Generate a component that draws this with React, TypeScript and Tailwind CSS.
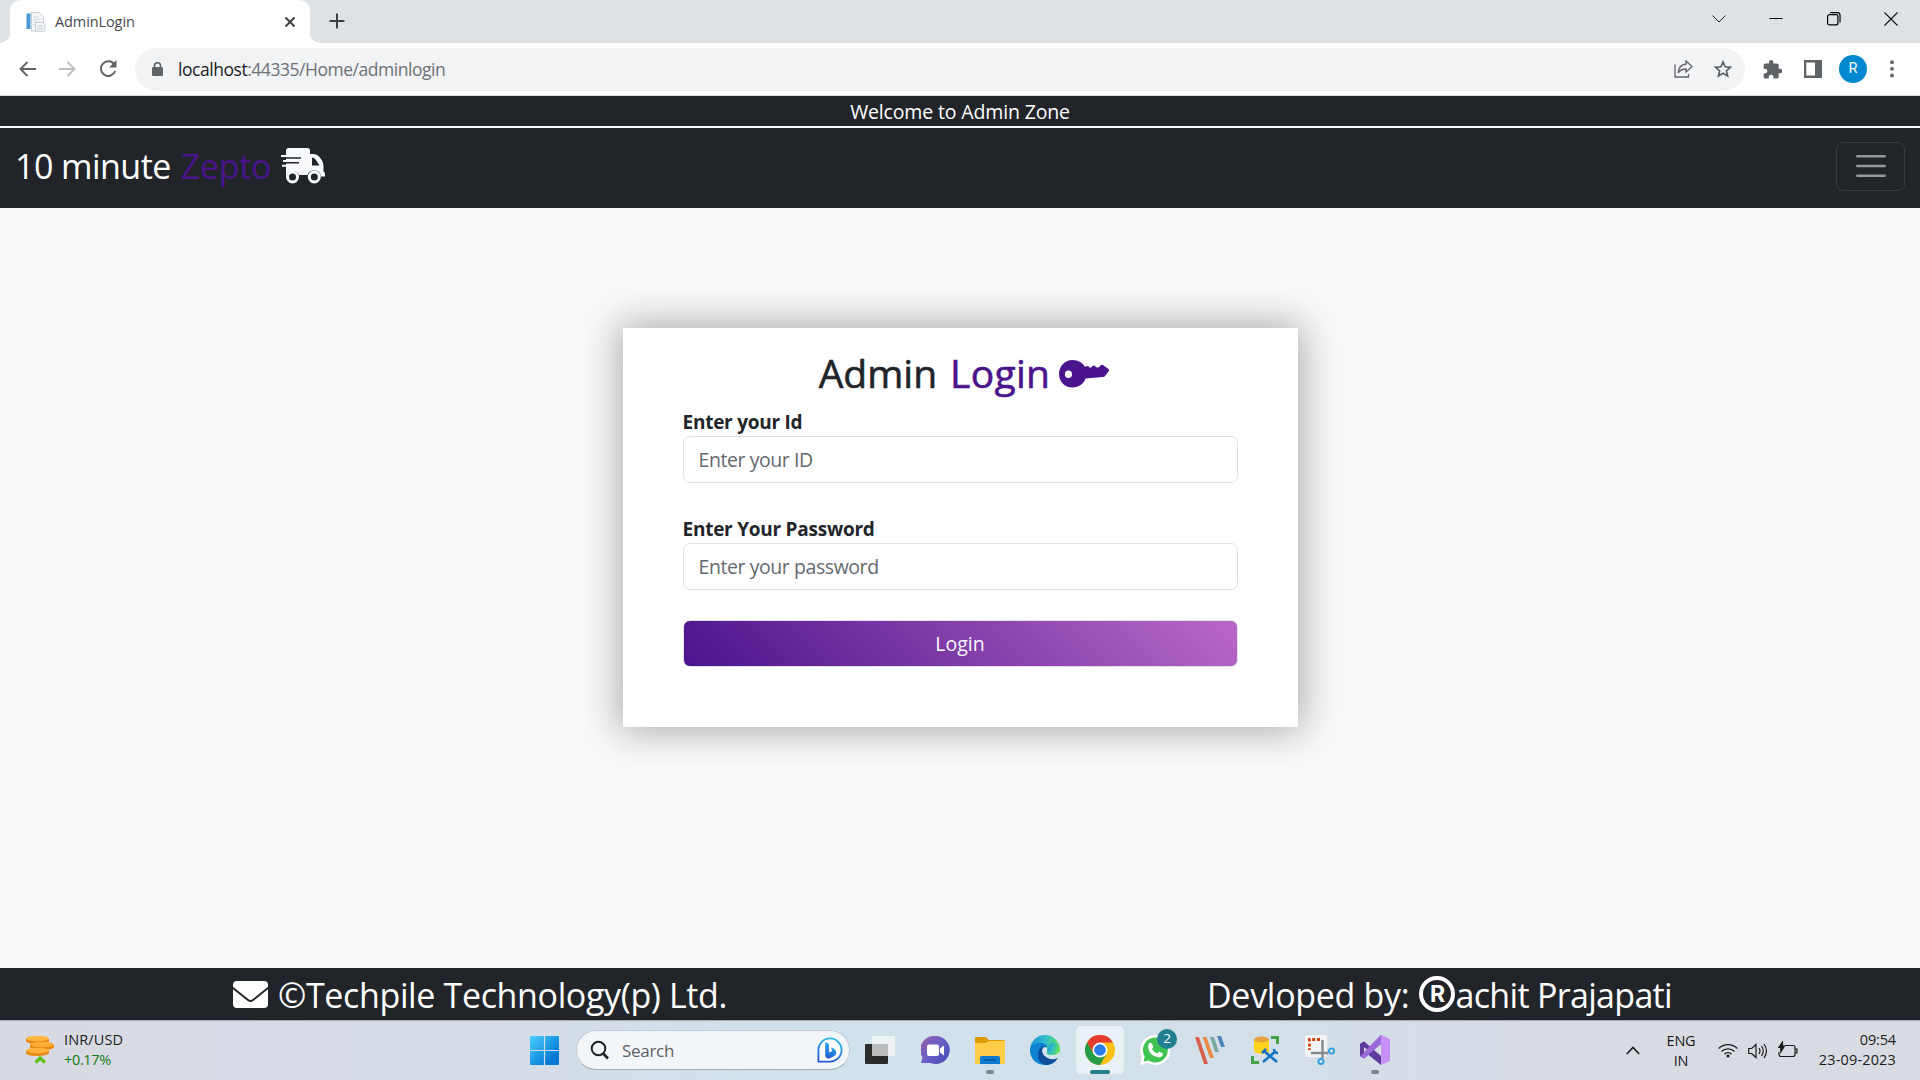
import type { ReactNode } from "react";

function Truck() {
  return (
    <svg className="h-9 w-11" viewBox="0 0 44 36" fill="none">
      <path
        fill="#f8f9fa"
        d="M8 0H26Q29 0 29 3V6H32Q36 6 38.500 9L41 12.500Q42.500 15 42.500 18V23.500Q44 24 44 26V28.500H40A7 7 0 0 0 26.500 27H18A7 7 0 0 0 5 28V18.800H1V16.800H5V14H2V12H5V9H0V7H5V3Q5 0 8 0Z"
      />
      <path fill="#212529" d="M31 9.500V17.500H38.500L35 12Q33.500 9.500 31 9.500Z" />
      <path stroke="#212529" strokeWidth="1.500" d="M0 9.900H20M4 14.800H18" />
      <circle cx="11.500" cy="29" r="5" stroke="#f8f9fa" strokeWidth="3" fill="#212529" />
      <circle cx="33.300" cy="29" r="5" stroke="#f8f9fa" strokeWidth="3" fill="#212529" />
    </svg>
  );
}

function KeyIcon() {
  return (
    <svg className="h-7 w-[50px]" viewBox="0 0 50 28" fill="#4a148c">
      <path
        fillRule="evenodd"
        d="M13.500 0C19.500 0 24 3 26 7Q29 5 30.500 7.500Q32 8.500 33.500 6Q35.500 4.500 37 7Q39.500 8.500 41 6Q43 4 44.500 5.500L49.500 9Q50.500 10 49.500 11.500L46 16Q45.500 16.800 44 17L26.500 18.500C24.500 24 20 27.500 13.500 27.500C5.500 27.500 0 21.500 0 14C0 6.500 5.500 0 13.500 0ZM9.500 10.500A3.600 3.700 0 1 0 9.500 17.900A3.600 3.700 0 1 0 9.500 10.500Z"
      />
    </svg>
  );
}

function BrowserChrome() {
  return (
    <div className="flex h-24 flex-col border-b border-[#d5d7da] bg-white text-[#5f6368]">
      <div className="flex h-[43px] items-stretch bg-[#dee1e6]">
        <div className="w-[10px] bg-white">
          <div className="h-full rounded-br-[10px] bg-[#dee1e6]" />
        </div>
        <div className="flex w-[300px] items-center rounded-t-[10px] bg-white pr-[14px] pl-4">
          <svg className="h-5 w-5" viewBox="0 0 20 20">
            <path fill="#f4f6f8" stroke="#c8ced6" d="M5.500.5H13L17.500 5v14h-12z" />
            <path fill="#4a9bd4" d="M.5 1.500h4v15.500h-4z" />
            <path stroke="#d3d8e0" d="M7 5h6M7 7.500h8M7 10h8M7 12.500h4" />
            <path fill="#f4f6f8" stroke="#c8ced6" d="M9.500 10.500h8l1.500 2v6.500H9.500z" />
            <path stroke="#c8ced6" d="M11 14h6M11 16.500h6" />
          </svg>
          <span className="ml-[9px] text-[14.500px] tracking-[-0.100px] text-[#45494d]">AdminLogin</span>
          <svg className="ml-auto h-3 w-3" viewBox="0 0 12 12" stroke="#3c4043" strokeWidth="2">
            <path d="M1.500 1.500l9 9M10.500 1.500l-9 9" />
          </svg>
        </div>
        <div className="w-[10px] bg-white">
          <div className="h-full rounded-bl-[10px] bg-[#dee1e6]" />
        </div>
        <svg className="mt-[13px] ml-[9px] h-4 w-4" viewBox="0 0 16 16" stroke="#3c4043" strokeWidth="2">
          <path d="M8 .5v15M.5 8h15" />
        </svg>
        <div className="mt-[11px] ml-auto flex h-4 items-center pr-[22px] text-black">
          <svg className="h-4 w-4" viewBox="0 0 16 16" fill="none" stroke="#222">
            <path d="M1.500 4.500L8 11l6.500-6.500" />
          </svg>
          <svg className="ml-[42px] h-4 w-[14px]" viewBox="0 0 14 16" stroke="#000">
            <path d="M.5 7.500h13" />
          </svg>
          <svg className="ml-[43px] h-4 w-4" viewBox="0 0 16 16" fill="none" stroke="#000" strokeWidth="1.200">
            <rect x="1.600" y="3.600" width="10.300" height="10.300" rx="2" />
            <path d="M4 1.600h7.300a2.700 2.700 0 0 1 2.700 2.700v7.200" />
          </svg>
          <svg className="ml-[42px] h-[14px] w-[14px]" viewBox="0 0 14 14" stroke="#111" strokeWidth="1.100">
            <path d="M.5.5l13 13M13.500.5l-13 13" />
          </svg>
        </div>
      </div>
      <div className="flex h-[52px] items-center">
        <svg className="ml-[19px] h-4 w-[17px]" viewBox="0 0 17 16" fill="none" stroke="#5f6368" strokeWidth="1.900">
          <path d="M17 8H2M8.500 1L1.500 8l7 7" />
        </svg>
        <svg className="ml-[23px] h-4 w-[17px]" viewBox="0 0 17 16" fill="none" stroke="#bdbfc1" strokeWidth="1.900">
          <path d="M0 8h15M8.500 1l7 7-7 7" />
        </svg>
        <svg className="ml-[23px] h-[18px] w-[18px]" viewBox="0 0 18 18" fill="none" stroke="#5f6368" strokeWidth="2">
          <path d="M15.300 4.500A7.300 7.300 0 1 0 16.200 11" />
          <path fill="#5f6368" stroke="none" d="M17.500 0v7.500H10z" />
        </svg>
        <div className="ml-[18px] flex h-[43px] w-[1610px] items-center rounded-full bg-[#f1f3f4] pr-[13px] pl-[17px]">
          <svg className="h-[14px] w-[11px]" viewBox="0 0 11 14">
            <rect y="5" width="11" height="9" rx="1.300" fill="#5f6368" />
            <path fill="none" stroke="#5f6368" strokeWidth="1.600" d="M2.500 6V3.700a3 3 0 0 1 6 0V6" />
          </svg>
          <span className="mt-[2px] ml-[15px] text-[17.500px] leading-none tracking-[-0.460px] text-[#6d7175]">
            <span className="text-[#202124]">localhost</span>:44335/Home/adminlogin
          </span>
          <svg className="ml-auto h-[18px] w-[19px]" viewBox="0 0 19 18" fill="none" stroke="#5f6368" strokeWidth="1.300">
            <path d="M1 4.500V17h13.500v-3" />
            <path d="M12 1l6 5.500-6 5.500V9C8 9 6 10 4.200 13 4.500 8 7.500 4.500 12 4z" />
          </svg>
          <svg className="ml-[21px] h-[18px] w-[18px]" viewBox="0 0 18 18" fill="none" stroke="#5f6368" strokeWidth="1.700">
            <path d="M9 1.900l2.100 4.900 5.300.5-4 3.500 1.200 5.200L9 13.200 4.400 16l1.200-5.200-4-3.500 5.300-.5z" />
          </svg>
        </div>
        <svg className="ml-[18px] h-[19px] w-[19px]" viewBox="1.500 1 21 21.500" fill="#5f6368">
          <path d="M20.500 11H19V7c0-1.100-.9-2-2-2h-4V3.500a2.500 2.500 0 0 0-5 0V5H4c-1.100 0-2 .9-2 2v3.800h1.500a2.700 2.700 0 0 1 0 5.400H2V20c0 1.100.9 2 2 2h3.800v-1.500a2.700 2.700 0 0 1 5.400 0V22H17c1.100 0 2-.9 2-2v-4h1.500a2.500 2.500 0 0 0 0-5z" />
        </svg>
        <svg className="ml-[22px] h-[18px] w-[18px]" viewBox="0 0 18 18">
          <path fill="#5f6368" fillRule="evenodd" d="M0 0h18v18H0zM2.300 2.500v13h8.700v-13z" />
        </svg>
        <div className="ml-[17px] flex h-7 w-7 items-center justify-center rounded-full bg-[#0288d1] font-[Roboto] text-[14.500px] text-white">
          R
        </div>
        <svg className="ml-[23px] h-[18px] w-1" viewBox="0 0 4 18" fill="#5f6368">
          <circle cx="2" cy="2.200" r="1.900" />
          <circle cx="2" cy="8.800" r="1.900" />
          <circle cx="2" cy="15.500" r="1.900" />
        </svg>
      </div>
    </div>
  );
}

function Field({ label, hint }: { label: string; hint: string }) {
  return (
    <div className="h-[107px]">
      <div className="h-[30px] text-[19px] leading-[32px] font-bold tracking-[-0.250px] text-[#212529]">{label}</div>
      <div className="flex h-[47px] items-center rounded-[7px] border border-[#dee2e6] bg-white px-[15px]">
        <span className="text-[19.500px] tracking-[-0.430px] text-[#64696e]">{hint}</span>
      </div>
    </div>
  );
}

function AdminPage() {
  return (
    <div className="flex h-[924px] flex-col bg-[#f8f9fb] text-[#f8f9fa]">
      <div className="flex h-[30px] items-center justify-center bg-[#212529] pt-[1px] text-[19.500px] tracking-[-0.150px] text-white">
        Welcome to Admin Zone
      </div>
      <div className="mt-[2px] flex h-20 items-center bg-[#212529] pr-[15px] pb-1 pl-[15px]">
        <div className="flex items-center text-[34px] leading-none text-white">
          <span className="tracking-[-0.550px]">10 minute</span>
          <span className="ml-[10px] tracking-[-0.300px] text-[#4a148c]">Zepto</span>
          <span className="ml-[10px]">
            <Truck />
          </span>
        </div>
        <div className="ml-auto flex h-[49px] w-[69px] items-center justify-center rounded-[7px] border border-[#36393e]">
          <svg className="h-6 w-[30px]" viewBox="0 0 30 24" stroke="#96989b" strokeWidth="2.500" strokeLinecap="round">
            <path d="M1.300 2.200h27.400M1.300 12h27.400M1.300 21.800h27.400" />
          </svg>
        </div>
      </div>
      <div className="flex flex-1 justify-center pt-[120px]">
        <div className="h-[399px] w-[675px] bg-white px-[60px] pt-[18px] shadow-[0_0_36px_4px_#a9aca9]">
          <div className="flex h-[60px] items-center justify-center pb-[4px] pl-[8px] text-[39px] leading-none text-[#212529]">
            <span className="mb-[4px] [-webkit-text-stroke:0.600px_#212529]">Admin</span>
            <span className="mb-[4px] ml-[13px] tracking-[0.300px] text-[#4a148c] [-webkit-text-stroke:0.600px_#4a148c]">Login</span>
            <span className="ml-[9px]">
              <KeyIcon />
            </span>
          </div>
          <Field label="Enter your Id" hint="Enter your ID" />
          <Field label="Enter Your Password" hint="Enter your password" />
          <div className="flex h-[47px] items-center justify-center rounded-[7px] border border-[#dee2e6] bg-[linear-gradient(45deg,#4a148c,#ba68c8)] text-[19.500px] text-[#f8f9fa]">
            Login
          </div>
        </div>
      </div>
      <div className="flex h-[52px] items-center bg-[#212529] text-[34px] leading-none text-white">
        <svg className="ml-[233px] h-[27px] w-[35px]" viewBox="0 0 36 27" preserveAspectRatio="none" fill="#fff">
          <path d="M4 0h28q4 0 4 4v1.800L20 18.300q-2 1.500-4 0L0 5.800V4q0-4 4-4z" />
          <path d="M0 8.200l14.800 11.600q3.200 2.400 6.400 0L36 8.200V23q0 4-4 4H4q-4 0-4-4z" />
        </svg>
        <span className="mt-[2px] ml-[10px] w-[929px] tracking-[-0.360px] whitespace-nowrap">©Techpile Technology(p) Ltd.</span>
        <span className="mt-[2px] tracking-[-0.300px] whitespace-nowrap">Devloped by:</span>
        <span className="ml-[10px] flex h-9 w-9 items-center justify-center rounded-full border-[4px] border-white font-[Inter] text-[23px] font-bold">
          R
        </span>
        <span className="mt-[2px] tracking-[-0.680px] whitespace-nowrap">achit Prajapati</span>
      </div>
    </div>
  );
}

function Slot({ children, mark, active }: { children: ReactNode; mark?: boolean; active?: boolean }) {
  return (
    <div className={active ? "relative flex h-12 w-12 items-center justify-center rounded-[5px] bg-[#e9f1f7] shadow-[0_0_1px_1px_#d3dde4]" : "relative flex h-12 w-12 items-center justify-center"}>
      {children}
      {mark && <div className="absolute bottom-0 h-1 w-2 rounded-full bg-[#7d8489]" />}
      {active && <div className="absolute bottom-0 h-1 w-5 rounded-full bg-[#227f8f]" />}
    </div>
  );
}

function Taskbar() {
  return (
    <div className="flex h-[60px] items-start border-t border-[#a9adb1] bg-[linear-gradient(90deg,#d8dae2_0%,#d5dce7_25%,#d0e2ec_45%,#d3dfe9_66%,#d9dbe3_85%,#d9dbe3_100%)] pt-[5px] text-[14.500px] text-[#1b1b1b]">
      <svg className="mt-[9px] ml-[26px] h-[29px] w-7" viewBox="0 0 28 29">
        <path fill="#e98713" d="M0 16v2c0 4 22 4 23 0v-2zM4 10v2c0 4 24 4 24 0v-2zM0 4v2c0 4 23 4 23 0V4z" />
        <ellipse cx="11.500" cy="15.500" rx="11.500" ry="2.800" fill="#ffb13c" />
        <ellipse cx="16" cy="9.500" rx="12" ry="2.800" fill="#ffac33" />
        <ellipse cx="11.500" cy="3.500" rx="11.500" ry="2.800" fill="#ffb743" />
        <path d="M9.500 27.500l4.700-4.500 4.700 4.500" fill="none" stroke="#5cbf14" strokeWidth="3.400" />
      </svg>
      <div className="mt-[4px] ml-[10px] w-[466px] leading-5">
        <div className="tracking-[0.120px]">INR/USD</div>
        <div className="tracking-[-0.350px] text-[#0f7b0f]">+0.17%</div>
      </div>
      <svg className="mt-[10px] h-[29px] w-[29px]" viewBox="0 0 29 29">
        <defs>
          <linearGradient id="win" x2="1" y2="1">
            <stop stopColor="#4cd0ff" />
            <stop offset=".8" stopColor="#0078d4" />
          </linearGradient>
        </defs>
        <path fill="url(#win)" d="M1 0h12.900v13.900H0V1q0-1 1-1zM15.100 0H28q1 0 1 1v12.900H15.100zM0 15.100h13.900V29H1q-1 0-1-1zM15.100 15.100H29V28q0 1-1 1H15.100z" />
      </svg>
      <div className="mt-1 ml-[17px] flex h-10 w-[274px] items-center rounded-full border border-[#c3cdd6] border-b-[#a5b3bc] bg-[#f2f6f9] pr-[6px] pl-[13px]">
        <svg className="h-5 w-5" viewBox="0 0 20 20" fill="none" stroke="#222">
          <circle cx="8.500" cy="8.500" r="6.800" strokeWidth="2" />
          <path strokeWidth="2.600" d="M13 13.500l5 5" />
        </svg>
        <span className="ml-[12px] text-[17px] leading-none tracking-[-0.300px] text-[#5c6064]">Search</span>
        <svg className="ml-auto h-[26px] w-[26px]" viewBox="0 0 27 27">
          <defs>
            <linearGradient id="bing" x1=".6" x2=".3" y2="1">
              <stop stopColor="#27b9ee" />
              <stop offset="1" stopColor="#2457d2" />
            </linearGradient>
          </defs>
          <path fill="#fff" stroke="url(#bing)" strokeWidth="1.900" d="M1.500 25.500V13.500a12 12 0 1 1 12 12z" />
          <path fill="url(#bing)" d="M8.500 5.500q3 0 4 2.500v8l3.500-1.500-1.500-3.500q5 1.500 5.500 5 0 2.500-2.500 4l-4 2q-2 .8-3.500-.3-1.500-1-1.500-3z" />
        </svg>
      </div>
      <div className="ml-[6px] flex gap-[7px]">
        <Slot>
          <svg className="h-7 w-[30px]" viewBox="0 0 30 28">
            <rect y="8" width="23" height="20" rx="1" fill="#2b2b2b" />
            <rect x="7" width="23" height="20" rx="1" fill="#f2f4f5" fillOpacity=".9" />
            <path fill="#b9bbbd" d="M7 8h16v12H7z" />
          </svg>
        </Slot>
        <Slot>
          <svg className="h-7 w-[29px]" viewBox="0 0 29 28">
            <defs>
              <linearGradient id="chat" x2=".8" y1=".3" y2=".9">
                <stop stopColor="#8c5fae" />
                <stop offset=".5" stopColor="#6a60c8" />
                <stop offset="1" stopColor="#4f50bd" />
              </linearGradient>
            </defs>
            <path fill="url(#chat)" d="M14.500 0a14 14 0 1 1-5 27H0l1.500-5.500A14 14 0 0 1 14.500 0z" />
            <rect x="6" y="8.500" width="12" height="11.500" rx="2" fill="#fff" />
            <path fill="#fff" d="M19 12.500l4-3v10l-4-3z" />
          </svg>
        </Slot>
        <Slot mark>
          <svg className="h-[27px] w-[30px]" viewBox="0 0 30 27">
            <path fill="#dc9a05" d="M1 0h10l3 3h15q1 0 1 1v5H0V1q0-1 1-1z" />
            <path fill="#ffcd48" d="M0 6h11l3-2h16v22q0 1-1 1H1q-1 0-1-1z" />
            <path fill="#0f7bd0" d="M5 27v-6q0-2 2-2h16q2 0 2 2v6z" />
            <path stroke="#064f92" strokeWidth="1.400" d="M9 23h12" />
          </svg>
        </Slot>
        <Slot>
          <svg className="h-[30px] w-[30px]" viewBox="0 0 30 30">
            <defs>
              <linearGradient id="edgeTop" x2="1" y2=".3">
                <stop stopColor="#1686cf" />
                <stop offset=".5" stopColor="#32bfd0" />
                <stop offset="1" stopColor="#60df58" />
              </linearGradient>
            </defs>
            <circle cx="15" cy="15" r="15" fill="url(#edgeTop)" />
            <path fill="#0f83d2" d="M0 15Q1 8 9 7.500q8 0 8.500 4.500Q12 12 12 18q1 6 7 7.500 4 .5 8.500-2.500-4 7-12.500 7Q1 29 0 15z" />
            <path fill="#0d4f9c" d="M9 15q2-4 6-4-4 6 1 10.500 5 3 12 1-4 7.500-12 7.500Q7 28 8 18z" />
            <path fill="#d4e4ee" d="M14 12q3 0 3.500 2.500-.3 2-1 3.500 0 2 4.500 2 6 0 9-4-.2 4-2.500 7-5 2.500-10 0-4-2-5.500-6.500 0-3.500 2-4.500z" />
            <path fill="url(#edgeTop)" d="M17 15q3 6 10 4 3-2 3-5Q28 5 20 9z" />
          </svg>
        </Slot>
        <Slot active>
          <svg className="h-[30px] w-[30px]" viewBox="0 0 30 30">
            <circle cx="15" cy="15" r="15" fill="#fbc116" />
            <path fill="#e33b2e" d="M2 7.500A15 15 0 0 1 28 7.500H15L8.500 18.800z" />
            <path fill="#259b47" d="M2 7.500A15 15 0 0 0 15 30l6.500-11.200L8.500 18.800z" />
            <circle cx="15" cy="15" r="7.500" fill="#fff" />
            <circle cx="15" cy="15" r="5.800" fill="#2a7de9" />
          </svg>
        </Slot>
        <Slot>
          <svg className="h-[30px] w-[30px]" viewBox="0 0 30 30">
            <path fill="#fff" d="M15 0a15 15 0 1 1-7 28L0 30l2-8A15 15 0 0 1 15 0z" />
            <path fill="#3fc351" d="M15 2.500a12.500 12.500 0 1 1-6.500 23L3.500 26.500l1.200-5A12.500 12.500 0 0 1 15 2.500z" />
            <path fill="#fff" d="M9.500 8h2l2 4-1.500 2q2 3.500 5.500 4.500l1.500-2 4 2q0 3.500-4 4Q9 21 8 12q0-3 1.500-4z" />
          </svg>
          <div className="absolute top-[3px] right-[2px] flex h-5 w-5 items-center justify-center rounded-full bg-[#227f8f] text-[13.500px] leading-none text-white">2</div>
        </Slot>
        <Slot>
          <svg className="h-7 w-[30px]" viewBox="0 0 30 28">
            <path fill="#d9604c" d="M0 1h4l9 27H9z" />
            <path fill="#e98a45" d="M7.500 1h4l7.500 21h-4z" />
            <path fill="#79a89c" d="M15 1h4l5 15h-4z" />
            <path fill="#4f84b8" d="M22 0h4l4 11h-4z" />
          </svg>
        </Slot>
        <Slot>
          <svg className="h-7 w-7" viewBox="0 0 28 28">
            <path fill="#45a049" d="M20 0h8v8h-3V3h-5zM0 20h3v5h5v3H0z" />
            <path fill="#ffd21c" d="M3 3h15v13q-7 4-15 0z" />
            <ellipse cx="10.500" cy="3.500" rx="7.500" ry="3" fill="#e8a23d" />
            <path stroke="#1673c4" strokeWidth="2.600" fill="none" d="M12 26l13-11M13 15l13 11M11 17l4-4M23 13q0 4 4 4" />
          </svg>
        </Slot>
        <Slot>
          <svg className="h-[30px] w-[30px]" viewBox="0 0 30 30">
            <rect width="22" height="22" rx="2" fill="#f3f4f6" />
            <path fill="none" stroke="#d1400f" strokeWidth="2.800" strokeDasharray="3 1.800" d="M15 4.500H4.500V15" />
            <path stroke="#83888c" strokeWidth="2.400" d="M17.500 5v18M6 18h17" />
            <circle cx="26.500" cy="16" r="2.600" fill="none" stroke="#2e9fe0" strokeWidth="1.800" />
            <circle cx="16" cy="26.500" r="2.600" fill="none" stroke="#2e9fe0" strokeWidth="1.800" />
          </svg>
        </Slot>
        <Slot mark>
          <svg className="h-[30px] w-[30px]" viewBox="0 0 30 30">
            <path fill="#a678e0" d="M0 21L21 0v9L4 23.500z" />
            <path fill="#5e3b9c" d="M0 9l4-2.500L21 21v9L8 19.500 4 23.500 0 21z" />
            <path fill="#d3e0ea" d="M4 12l4 3-4 3z" />
            <path fill="#9a6ad8" d="M0 21L21 0v9L4 23.500z" />
            <path fill="#5e3b9c" d="M0 9l4-2.500 5 4.500-2.500 3L4 12v6l-4 3z" />
            <path fill="#c690f7" d="M21 0l9 4v22l-9 4z" />
          </svg>
        </Slot>
      </div>
      <div className="mt-[1px] ml-auto flex items-start pr-6">
        <svg className="mt-[19px] h-[9px] w-[14px]" viewBox="0 0 14 9" fill="none" stroke="#1b1b1b" strokeWidth="1.600">
          <path d="M.8 8L7 1.500 13.200 8" />
        </svg>
        <div className="mt-[4px] ml-[26px] w-[30px] text-center leading-5 tracking-[-0.200px]">
          <div>ENG</div>
          <div>IN</div>
        </div>
        <svg className="mt-[16px] ml-[22px] h-[15px] w-5" viewBox="0 0 20 15" fill="none" stroke="#1b1b1b" strokeWidth="1.300">
          <path d="M.7 5.500a13 13 0 0 1 18.600 0M3.600 8.500a9 9 0 0 1 12.800 0M6.500 11.200a5 5 0 0 1 7 0" />
          <circle cx="10" cy="13" r="1.500" fill="#1b1b1b" stroke="none" />
        </svg>
        <svg className="mt-[15px] ml-[10px] h-[18px] w-5" viewBox="0 0 20 18" fill="none" stroke="#1b1b1b" strokeWidth="1.200">
          <path d="M.7 6.500h3L8 2.500v13L3.700 11.500h-3zM11 6q2 3 0 6M13.500 4q3.500 5 0 10M16 2q5 7 0 14" />
        </svg>
        <svg className="mt-[14px] ml-[10px] h-[17px] w-5" viewBox="0 0 20 17" fill="none" stroke="#1b1b1b" strokeWidth="1.200">
          <path d="M7 4.500h8q2 0 2 2v7q0 2-2 2H3q-2 0-2-2V11M17 8h2v4h-2" />
          <path fill="#1b1b1b" d="M4.500 1L.8 6.500h2V11L6.500 5h-2z" />
        </svg>
        <div className="mt-[3px] ml-5 w-[78px] text-right leading-5 whitespace-nowrap">
          <div className="tracking-[-0.150px]">09:54</div>
          <div className="tracking-[0.150px]">23-09-2023</div>
        </div>
      </div>
    </div>
  );
}

export default function App() {
  return (
    <div className="h-[1080px] w-[1920px] overflow-hidden font-['Open_Sans','Noto_Sans',sans-serif]">
      <BrowserChrome />
      <AdminPage />
      <Taskbar />
    </div>
  );
}
